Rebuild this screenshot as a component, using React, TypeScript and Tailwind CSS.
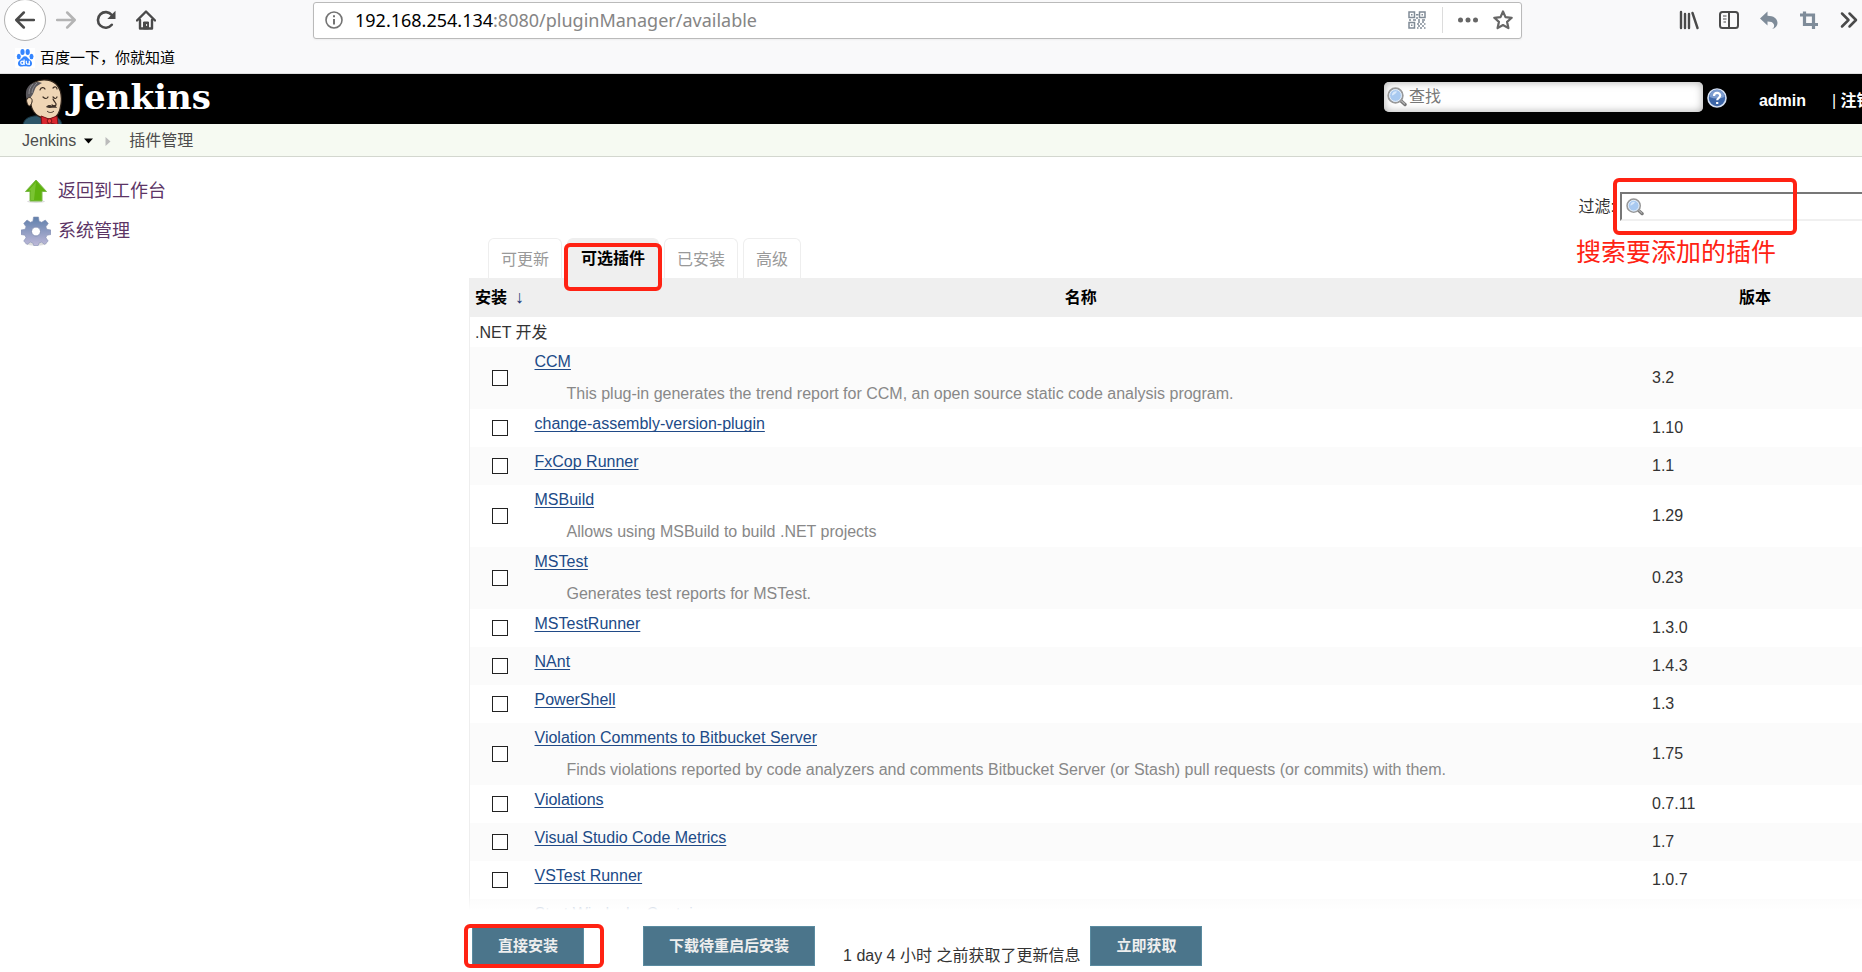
import type { ReactNode } from 'react';

interface Plugin {
  name: string;
  version?: string;
  description?: string;
}

const plugins: Plugin[] = [
  {
    name: 'CCM',
    version: '3.2',
    description:
      'This plug-in generates the trend report for CCM, an open source static code analysis program.',
  },
  { name: 'change-assembly-version-plugin', version: '1.10' },
  { name: 'FxCop Runner', version: '1.1' },
  { name: 'MSBuild', version: '1.29', description: 'Allows using MSBuild to build .NET projects' },
  { name: 'MSTest', version: '0.23', description: 'Generates test reports for MSTest.' },
  { name: 'MSTestRunner', version: '1.3.0' },
  { name: 'NAnt', version: '1.4.3' },
  { name: 'PowerShell', version: '1.3' },
  {
    name: 'Violation Comments to Bitbucket Server',
    version: '1.75',
    description:
      'Finds violations reported by code analyzers and comments Bitbucket Server (or Stash) pull requests (or commits) with them.',
  },
  { name: 'Violations', version: '0.7.11' },
  { name: 'Visual Studio Code Metrics', version: '1.7' },
  { name: 'VSTest Runner', version: '1.0.7' },
  { name: 'Start Windocks Containers' },
];

const tabs = [
  { label: '可更新', active: false },
  { label: '可选插件', active: true },
  { label: '已安装', active: false },
  { label: '高级', active: false },
];

function Magnifier({ className }: { className: string }) {
  return (
    <svg viewBox="0 0 20 20" className={className} aria-hidden="true">
      <path d="M13 13l5 4.500" stroke="#777" strokeWidth="3.400" strokeLinecap="round" />
      <path d="M13.400 13l4.200 3.800" stroke="#b5b5b5" strokeWidth="1.200" strokeLinecap="round" />
      <circle cx="8.500" cy="8.500" r="7.300" fill="#b5d3f5" stroke="#999" strokeWidth="1.800" />
      <circle cx="8.500" cy="8.500" r="5.900" fill="#a8c9f0" stroke="#e8eef5" strokeWidth="1" />
      <path d="M5 7a4 4 0 0 1 5-2.500c-1 2-3 3.500-5 4z" fill="#d8e8fa" />
    </svg>
  );
}

function Highlight({ className }: { className: string }) {
  return (
    <div
      className={`pointer-events-none absolute z-20 rounded-md border-4 border-[#ff2213] ${className}`}
    />
  );
}

function ToolButton({ label, className, children }: { label: string; className?: string; children: ReactNode }) {
  return (
    <button type="button" aria-label={label} className={`flex h-5 w-5 items-center justify-center ${className ?? ''}`}>
      {children}
    </button>
  );
}

function BrowserToolbar() {
  return (
    <div className="flex h-10 items-center">
      <div className="flex w-[313px] shrink-0 items-center gap-5 pl-1">
        <button
          type="button"
          aria-label="后退"
          className="flex h-[42px] w-[42px] items-center justify-center rounded-full border border-[#b1b1b1] bg-white"
        >
          <svg viewBox="0 0 20 20" className="h-5 w-5" fill="none" stroke="#4a4a4a" strokeWidth="2.500" strokeLinecap="round" strokeLinejoin="round">
            <path d="M19 10H1.500M8.800 2.500L1.300 10l7.500 7.500" />
          </svg>
        </button>
        <div className="-ml-2.5 flex gap-5">
          <ToolButton label="前进">
            <svg viewBox="0 0 20 20" className="h-5 w-5" fill="none" stroke="#b4b4b4" strokeWidth="2.500" strokeLinecap="round" strokeLinejoin="round">
              <path d="M1 10h17.500M11.200 2.500l7.500 7.500-7.500 7.500" />
            </svg>
          </ToolButton>
          <ToolButton label="刷新">
            <svg viewBox="0 0 20 20" className="h-5 w-5" fill="none" stroke="#4a4a4a">
              <path d="M15.800 14.800A7.800 7.800 0 1 1 15.800 5" strokeWidth="2.600" strokeLinecap="round" />
              <path d="M19.500 .8v8.200h-8.200z" fill="#4a4a4a" stroke="none" />
            </svg>
          </ToolButton>
          <ToolButton label="主页">
            <svg viewBox="0 0 20 20" className="h-5 w-5" fill="none" stroke="#4a4a4a" strokeLinejoin="round" strokeLinecap="round">
              <path d="M1 10.500L10 1.500l9 9" strokeWidth="2.400" />
              <path d="M4 10v8.500h12V10" strokeWidth="2.400" />
              <path d="M7.500 18.500v-6.500h5v6.500z" fill="#4a4a4a" strokeWidth="1" />
              <path d="M10.600 14.500v1" stroke="#fff" strokeWidth="1" />
            </svg>
          </ToolButton>
        </div>
      </div>

      <div className="flex h-[37px] w-[1209px] shrink items-center rounded-[3px] border border-[#bababa] bg-white pl-[11px] pr-2 shadow-xs">
        <svg viewBox="0 0 18 18" className="h-[18px] w-[18px] shrink-0" fill="none" stroke="#737373">
          <circle cx="9" cy="9" r="8" strokeWidth="1.600" />
          <path d="M9 8v5.500M9 4.200v2" strokeWidth="2" />
        </svg>
        <p className="ml-3 flex-1 whitespace-nowrap font-['Noto_Sans','Noto_Sans_CJK_SC',sans-serif] text-lg leading-6 text-[#858585]">
          <span className="text-black">192.168.254.134</span>:8080/pluginManager/available
        </p>
        <svg viewBox="0 0 18 18" className="h-[18px] w-[18px] shrink-0" fill="none" stroke="#808b96" strokeWidth="1.500">
          <path d="M1 1h5.500v5.500H1zM11.500 1H17v5.500h-5.500zM1 11.500h5.500V17H1z" />
          <path d="M3 3.700h1.500M13.500 3.700H15M3 14.200h1.500M8 3.700h2.500M1 9h2M5 9h3M10 9h2M14 9h3M9 6v2M10 11h2M14 11h2M12 13h2M16 13h1.500M9 13h2M10 15h2M14 15h2M9 17h1.500M12 17h2M16 17h1.500" />
        </svg>
        <div className="ml-4 h-[26px] w-px bg-[#dcdcdc]" />
        <ToolButton label="页面操作" className="ml-[15px]">
          <svg viewBox="0 0 20 20" className="h-5 w-5" fill="#666">
            <circle cx="2.500" cy="10" r="2.500" />
            <circle cx="10" cy="10" r="2.500" />
            <circle cx="17.500" cy="10" r="2.500" />
          </svg>
        </ToolButton>
        <ToolButton label="收藏" className="ml-[15px]">
          <svg viewBox="0 0 20 20" className="h-5 w-5" fill="none" stroke="#666" strokeWidth="2.200" strokeLinejoin="round">
            <path d="M10 1.500l2.500 5.600 6.200.7-4.600 4.100 1.300 6.200L10 15l-5.400 3.100 1.300-6.200L1.300 7.800l6.200-.7z" />
          </svg>
        </ToolButton>
      </div>

      <div className="ml-auto flex items-center gap-5 pr-[3px]">
        <ToolButton label="书库">
          <svg viewBox="0 0 20 20" className="h-5 w-5" fill="none" stroke="#4a4a4a" strokeWidth="2.400" strokeLinecap="round">
            <path d="M2 2v16M6 4v14M10 4v14M13.500 3l5 15" />
          </svg>
        </ToolButton>
        <ToolButton label="侧栏">
          <svg viewBox="0 0 20 20" className="h-5 w-5" fill="none" stroke="#4a4a4a" strokeWidth="2">
            <rect x="1" y="2" width="18" height="16" rx="2.500" />
            <path d="M10 2v16" />
            <path d="M4 6h3.500M4 9h3.500M4.500 12H7" strokeWidth="1.200" />
          </svg>
        </ToolButton>
        <ToolButton label="撤销">
          <svg viewBox="0 0 20 20" className="h-5 w-5" fill="#7f8c99">
            <path d="M8.500 1.500v4.200c6 0 10 2.800 10 7.300 0 3-2 5.300-5.500 6 2.300-1.500 2.500-3.200 1.800-4.800-.9-2-3-2.700-6.300-2.700v4L1 8.500z" />
          </svg>
        </ToolButton>
        <ToolButton label="截图">
          <svg viewBox="0 0 20 20" className="h-5 w-5" fill="none" stroke="#7f8c99" strokeWidth="3.200">
            <path d="M5.500 1.500v13H19M1 5h13.500v14" />
          </svg>
        </ToolButton>
        <ToolButton label="更多工具">
          <svg viewBox="0 0 20 20" className="h-5 w-5" fill="none" stroke="#4a4a4a" strokeWidth="2.500" strokeLinecap="round" strokeLinejoin="round">
            <path d="M3 3.500l6.500 6.500L3 16.500M10.500 3.500L17 10l-6.500 6.500" />
          </svg>
        </ToolButton>
      </div>
    </div>
  );
}

function BaiduIcon() {
  return (
    <svg viewBox="0 0 20 20" className="h-5 w-5 bg-white" fill="#3385ff" aria-hidden="true">
      <ellipse cx="3.800" cy="8.500" rx="2" ry="2.700" />
      <ellipse cx="7.500" cy="4" rx="2.100" ry="2.900" />
      <ellipse cx="12.700" cy="4" rx="2.100" ry="2.900" />
      <ellipse cx="16.500" cy="8.500" rx="2" ry="2.700" />
      <path d="M10 8.200c2.200 0 3 2 4.500 3.300 1.700 1.500 2.800 2.500 2.500 4.500-.3 2.200-2.200 2.700-4 2.500-2-.2-4-.2-6 0-1.800.2-3.700-.5-4-2.500-.3-2 1-3.200 2.500-4.500C7 10.200 7.800 8.200 10 8.200z" />
      <g fill="none" stroke="#fff" strokeWidth="1.200">
        <circle cx="7.300" cy="14.700" r="1.600" />
        <path d="M9.100 11.500V17M11.300 12.800v2.200c0 1.500 3 1.500 3 0v-2.200M14.300 15v2" />
      </g>
    </svg>
  );
}

function JenkinsHead() {
  return (
    <svg viewBox="0 0 42 46" className="h-[46px] w-[42px]" aria-hidden="true">
      <path d="M1 46c1-6 5-8 11-9l17-1c6 1 10 4 11 10z" fill="#2d5568" stroke="#16303c" />
      <path d="M9 26C4 20 4 11 9 6c6-6 18-7 25-1 5 5 6 13 5 20-1 8-4 14-10 15-9 1-18-4-20-14z" fill="#efd5b5" stroke="#30241b" strokeWidth="1.200" />
      <path d="M9 18c3-3 3-7 5-10 2-2 4-3 6-4C13 1 5 6 4 13c-.5 6 1 9 3 11z" fill="#58565b" />
      <path d="M15 4c-3 3-5 6-5 10M11 5c-3 3-4 6-4 10" stroke="#8e8c90" fill="none" />
      <path d="M5 20c2-3 6-1 5 3s-3 5-4 3-2-4-1-6z" fill="#efd5b5" stroke="#30241b" />
      <path d="M18 11c1-3 4-3 5-1M31 9c2-2 4-1 4 1M21 18c2 2 4 2 5 0M31 18c2 2 3 2 4 0M31 20c1 3 4 4 3 6-1 1-3 1-4 0" fill="none" stroke="#3b2c22" strokeWidth="1.200" strokeLinecap="round" />
      <path d="M24 28c2-3 5-2 6-1 3-1 4 0 5 2-4-1-7 1-11-1z" fill="#40332b" />
      <path d="M25 32c2 2 5 2 7 0" fill="none" stroke="#3b2c22" />
      <path d="M25 40l5 6h-9z" fill="#fff" />
      <path d="M19 37l8 3 8-3 1 9-8-2-8 3z" fill="#d9272e" stroke="#7c1216" />
      <circle cx="27.500" cy="42" r="2.300" fill="#ef3d3a" stroke="#7c1216" />
    </svg>
  );
}

function JenkinsHeader() {
  return (
    <header className="flex h-[50px] items-start bg-black">
      <a href="#home" className="flex items-start gap-1 pl-[22px]" aria-label="Jenkins">
        <span className="h-[50px] overflow-hidden pt-[5px]">
          <JenkinsHead />
        </span>
        <span className="pt-[3px] font-['DejaVu_Serif',serif] text-[34px] font-bold leading-10 text-white">
          Jenkins
        </span>
      </a>
      <div className="ml-auto flex items-start">
        <label className="mt-2 flex h-[30px] w-[319px] items-center gap-0.5 rounded-[5px] bg-white pl-[3px] inset-shadow-[0_0_8px_#aaa]">
          <Magnifier className="h-5 w-5 shrink-0" />
          <input
            type="text"
            aria-label="查找"
            placeholder="查找"
            className="min-w-0 flex-1 bg-transparent text-base leading-6 outline-none placeholder:text-[#777]"
          />
        </label>
        <a href="#help" aria-label="帮助" className="ml-1 mt-3.5">
          <svg viewBox="0 0 20 20" className="h-5 w-5">
            <circle cx="10" cy="10" r="9" fill="#3d66a8" stroke="#d5e0f2" strokeWidth="1.600" />
            <path d="M2.500 9a7.500 7.500 0 0 1 15 0c-5 2-10 2-15 0z" fill="#7d9dd0" />
            <path d="M7 8c0-4 6.200-4 6.200-.5 0 2.300-3 2.300-3 4.800M10.200 14v2" fill="none" stroke="#fff" strokeWidth="2.200" />
          </svg>
        </a>
        <a href="#admin" className="ml-8 mt-[15px] text-base font-bold leading-6 text-white">
          admin
        </a>
        <div className="ml-[26px] mt-[15px] w-[30px] overflow-hidden whitespace-nowrap text-base font-bold leading-6 text-white">
          <span className="font-normal">|</span> <a href="#logout">注销</a>
        </div>
      </div>
    </header>
  );
}

function Sidebar() {
  return (
    <nav className="flex w-[469px] shrink-0 flex-col gap-4 pl-[21px] pt-[22px] text-lg leading-6 text-[#5c3566]">
      <a href="#dashboard" className="flex items-center gap-[7px]">
        <svg viewBox="0 0 30 24" className="h-6 w-[30px]" aria-hidden="true">
          <ellipse cx="15" cy="22.500" rx="9" ry="1.500" fill="#ddd" />
          <path d="M15 1L4.500 12.500H9V22h12v-9.500h4.500z" fill="#5fb30f" stroke="#7cba4a" />
          <path d="M15 3L7.500 11.500H10V21h3z" fill="#8ccf4a" opacity=".6" />
        </svg>
        返回到工作台
      </a>
      <a href="#manage" className="flex items-center gap-[7px]">
        <svg viewBox="0 0 30 30" className="-my-1 h-[30px] w-[30px]" aria-hidden="true">
          <defs>
            <linearGradient id="gear" x1="0" y1="0" x2="0" y2="1">
              <stop offset="0" stopColor="#5f7fab" />
              <stop offset="1" stopColor="#bdb8d8" />
            </linearGradient>
          </defs>
          <ellipse cx="15" cy="27.500" rx="11" ry="2" fill="#ddd" />
          <path
            d="M12.500 1h5l.6 4.200 2.600 1.100L24.300 4l3 3.500-2.400 3.300 1 2.500 4 .7v4.500l-4 .8-1 2.400 2.300 3.400-3.400 3.300-3.400-2.300-2.400 1-.8 2.400h-4.500l-.8-2.400-2.500-1L6 28.400 2.700 25l2.300-3.300-1-2.500-4-.7V14l4-.7 1-2.500L2.700 7.400 6 4l3.400 2.300 2.500-1.100z"
            fill="url(#gear)"
            stroke="#8490b3"
            strokeWidth=".6"
          />
          <circle cx="15" cy="15.500" r="4.500" fill="#fff" stroke="#8490b3" />
        </svg>
        系统管理
      </a>
    </nav>
  );
}

function PluginTable() {
  return (
    <table className="w-full table-fixed border-l border-[#eee] text-left text-base text-[#333]">
      <colgroup>
        <col className="w-[60px]" />
        <col />
        <col className="w-[214px]" />
      </colgroup>
      <thead>
        <tr className="h-[39px] bg-[#efefef] text-black">
          <th scope="col" className="whitespace-nowrap pl-[5px] font-bold">
            安装
            <span className="ml-2 font-['Liberation_Serif',serif] text-lg font-normal leading-6 text-[#203a77]">
              ↓
            </span>
          </th>
          <th scope="col" className="pr-4 text-center font-bold">
            名称
          </th>
          <th scope="col" className="text-center font-bold">
            版本
          </th>
        </tr>
      </thead>
      <tbody>
        <tr className="h-[30px]">
          <td colSpan={3} className="pl-[5px] pt-0.5 leading-6">
            .NET 开发
          </td>
        </tr>
        {plugins.map((plugin, index) => (
          <tr
            key={plugin.name}
            className={`${plugin.description || !plugin.version ? 'h-[62px]' : 'h-[38px]'} ${index % 2 === 0 ? 'bg-[#fbfbfb]' : 'bg-white'}`}
          >
            <td className="pl-[22px] align-middle">
              <input
                type="checkbox"
                id={`plugin-${index}`}
                aria-label={plugin.name}
                className="block h-4 w-4 appearance-none border border-[#222] bg-white"
              />
            </td>
            <td className="whitespace-nowrap pl-[5px] pt-1.5 align-top leading-[18px]">
              <a
                href={`#${plugin.name}`}
                className="block w-fit text-[#204a87] underline underline-offset-2 [text-decoration-skip-ink:none]"
              >
                {plugin.name}
              </a>
              {plugin.description && (
                <p className="ml-8 mt-3.5 text-[#888]">{plugin.description}</p>
              )}
            </td>
            <td className="pl-1 align-middle">{plugin.version}</td>
          </tr>
        ))}
      </tbody>
    </table>
  );
}

function ActionButton({ children }: { children: ReactNode }) {
  return (
    <button
      type="button"
      className="h-10 border border-[#5a8ba0] bg-[#4b758b] px-[25px] text-[15px] font-bold leading-6 text-[#eee]"
    >
      {children}
    </button>
  );
}

export default function App() {
  return (
    <div className="flex h-screen flex-col overflow-hidden bg-white font-['Liberation_Sans','Noto_Sans_CJK_SC',sans-serif]">
      <div className="h-[74px] shrink-0 border-b border-[#e0e0e0] bg-[#f9f9fa]">
        <BrowserToolbar />
        <div className="flex h-[34px] items-center pl-[15px] pt-0.5">
          <a href="#baidu" className="flex items-center gap-[5px] text-[15px] leading-5 text-black">
            <BaiduIcon />
            百度一下，你就知道
          </a>
        </div>
      </div>

      <JenkinsHeader />

      <nav className="flex h-[33px] shrink-0 items-center border-b border-[#d3d7cf] bg-[#f6faf2] pl-[22px] pt-0.5 text-base leading-6 text-[#4d4d4d]">
        <a href="#home">Jenkins</a>
        <svg viewBox="0 0 9 6" className="ml-2 h-1.5 w-[9px]">
          <path d="M0 .5h9L4.500 5.500z" fill="#000" />
        </svg>
        <svg viewBox="0 0 6 9" className="ml-3 mr-[18px] h-[9px] w-1.5">
          <path d="M.5 0v9L5.500 4.500z" fill="#bbb" />
        </svg>
        <a href="#plugins">插件管理</a>
      </nav>

      <div className="flex min-h-0 flex-1">
        <Sidebar />
        <main className="flex min-w-0 flex-1 flex-col">
          <div className="flex h-[81px] shrink-0 justify-end pt-[35px]">
            <div className="relative flex h-[29px] items-center gap-[5px]">
              <label htmlFor="filter" className="text-base leading-6 text-[#333]">
                过滤:
              </label>
              <div className="flex h-[29px] w-[242px] items-center border-b-2 border-l-2 border-t-2 border-b-[#f0f0f0] border-l-[#777] border-t-[#777] pl-1">
                <Magnifier className="h-[18px] w-[18px] shrink-0" />
                <input id="filter" type="text" className="min-w-0 flex-1 outline-none" />
              </div>
              <Highlight className="-top-3.5 right-[65px] h-[57px] w-[184px]" />
              <p className="absolute right-[86px] top-[42px] whitespace-nowrap text-[25px] leading-9 text-[#ff2213]">
                搜索要添加的插件
              </p>
            </div>
          </div>

          <div className="flex h-10 shrink-0 gap-[5px] pl-[19px]">
            {tabs.map((tab) => (
              <div key={tab.label} className="relative">
                <a
                  href={`#${tab.label}`}
                  className={`flex h-full items-center rounded-t-md border-x border-t border-[#eee] text-base leading-6 ${
                    tab.active ? 'bg-[#efefef] px-[13px] font-bold text-black' : 'bg-white px-3 pt-0.5 text-[#999]'
                  }`}
                >
                  {tab.label}
                </a>
                {tab.active && <Highlight className="-inset-x-[3px] top-[5px] h-12" />}
              </div>
            ))}
          </div>

          <div className="relative min-h-0 flex-1 overflow-hidden">
            <PluginTable />
            <div className="absolute inset-x-0 bottom-0 h-4 bg-linear-to-b from-white/0 to-white" />
          </div>

          <footer className="flex h-[62px] shrink-0 items-start pl-[3px] pt-4">
            <div className="relative">
              <ActionButton>直接安装</ActionButton>
              <Highlight className="-left-2 -right-5 -top-0.5 h-11" />
            </div>
            <div className="ml-[59px]">
              <ActionButton>下载待重启后安装</ActionButton>
            </div>
            <p className="ml-7 mr-2.5 mt-[18px] text-base leading-6 text-[#333]">
              1 day 4 小时 之前获取了更新信息
            </p>
            <ActionButton>立即获取</ActionButton>
          </footer>
        </main>
      </div>
    </div>
  );
}
